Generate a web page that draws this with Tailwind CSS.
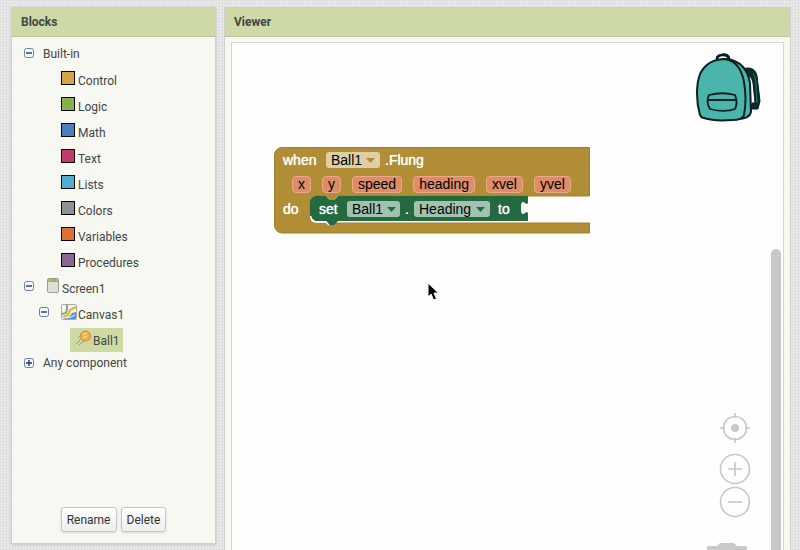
<!DOCTYPE html>
<html lang="en">
<head>
<meta charset="utf-8">
<meta name="viewport" content="width=device-width, initial-scale=1">
<title>Blocks editor</title>
<script src="https://cdn.jsdelivr.net/npm/@tailwindcss/browser@4"></script>
</head>
<body class="h-screen overflow-hidden bg-[#e9e9e9] bg-[repeating-linear-gradient(0deg,#00000008_0_1px,transparent_1px_3px),repeating-linear-gradient(90deg,#00000008_0_1px,transparent_1px_3px)] font-[Roboto,sans-serif] text-[12px] text-[#444]">
<svg class="hidden" aria-hidden="true">
  <symbol id="minus" viewBox="0 0 10 10"><rect x=".5" y=".5" width="9" height="9" rx="2" fill="#f4f6fb" stroke="#6d7db0"/><path d="M2 5h6" stroke="#26357c" stroke-width="1.4"/></symbol>
  <symbol id="plus" viewBox="0 0 10 10"><rect x=".5" y=".5" width="9" height="9" rx="2" fill="#f4f6fb" stroke="#6d7db0"/><path d="M2 5h6M5 2v6" stroke="#26357c" stroke-width="1.4"/></symbol>
</svg>
<div class="flex h-full gap-2 pt-[7px] pr-[9px] pl-[11px]">
  <aside class="mb-[6px] flex w-[205px] shrink-0 flex-col border border-[#cfcfcf] bg-[#f6f8f1] shadow-sm">
    <h2 class="h-[29px] border-b border-[#b9c79b] bg-[#cddaa8] pl-[9px] text-[12px] leading-[28px] font-bold">Blocks</h2>
    <ul class="flex-1 pt-[3px] whitespace-nowrap">
      <li>
        <div class="flex h-[28px] pl-[12px] leading-[28px]"><button class="h-[26px]" aria-label="Collapse Built-in"><svg class="size-[10px]"><use href="#minus"/></svg></button><span class="pl-[9px]">Built-in</span></div>
        <ul class="pl-[49px] leading-[27px]">
          <li class="flex h-[26px] gap-[3px]"><i class="mt-[3px] size-[14px] border border-black bg-[#d3a548]"></i>Control</li>
          <li class="flex h-[26px] gap-[3px]"><i class="mt-[3px] size-[14px] border border-black bg-[#8ab04a]"></i>Logic</li>
          <li class="flex h-[26px] gap-[3px]"><i class="mt-[3px] size-[14px] border border-black bg-[#4a80c0]"></i>Math</li>
          <li class="flex h-[26px] gap-[3px]"><i class="mt-[3px] size-[14px] border border-black bg-[#c33a6c]"></i>Text</li>
          <li class="flex h-[26px] gap-[3px]"><i class="mt-[3px] size-[14px] border border-black bg-[#4eafd0]"></i>Lists</li>
          <li class="flex h-[26px] gap-[3px]"><i class="mt-[3px] size-[14px] border border-black bg-[#8e9094]"></i>Colors</li>
          <li class="flex h-[26px] gap-[3px]"><i class="mt-[3px] size-[14px] border border-black bg-[#dc6f32]"></i>Variables</li>
          <li class="flex h-[26px] gap-[3px]"><i class="mt-[3px] size-[14px] border border-black bg-[#8b6598]"></i>Procedures</li>
        </ul>
      </li>
      <li>
        <div class="flex h-[26px] pl-[12px] leading-[27px]">
          <button class="h-5" aria-label="Collapse Screen1"><svg class="size-[10px]"><use href="#minus"/></svg></button>
          <svg class="mt-[2px] mr-[3px] ml-[13px] h-4 w-3" viewBox="0 0 12 16"><rect x=".5" y=".5" width="11" height="14" rx="1" fill="#dedfdd" stroke="#9b9d98"/><path d="M1 1h10v3H1z" fill="#a4ae55"/><path d="M1 2h2M5 2h1M9 2h2" stroke="#e7d84a"/></svg>Screen1
        </div>
        <ul>
          <li>
            <div class="flex h-[26px] pl-[27px] leading-[27px]">
              <button class="h-5" aria-label="Collapse Canvas1"><svg class="size-[10px]"><use href="#minus"/></svg></button>
              <svg class="mt-[2px] mr-[1px] ml-[12px] size-4" viewBox="0 0 16 16"><rect x=".5" y=".5" width="15" height="15" rx="1" fill="#f3f6f8" stroke="#a5a9ad"/><path d="M1 10l4-1 1-4 0-4" fill="none" stroke="#86ad62" stroke-width="2"/><path d="M2 13l5-2 2-5 6-3" fill="none" stroke="#e7b23e" stroke-width="2.4"/><path d="M2 15l6-2 3-4 4-1v7z" fill="#5d93cb"/><path d="M5 14l5-1 4-2" fill="none" stroke="#eef4fa"/></svg>Canvas1
            </div>
            <ul class="pl-[58px]">
              <li class="flex h-6 w-[53px] bg-[#cddaa3] pl-[5px] leading-[27px]"><svg class="mt-[2px] mr-[1px] h-4 w-[17px]" viewBox="0 0 17 16"><path d="M7 8l-6 6M9 11l-5 4M5 6L3 8" stroke="#8d8d7d" stroke-width=".9"/><circle cx="10.5" cy="6" r="5" fill="#f0b247" stroke="#c58638"/><path d="M8 5c1-2 3-2 4-1M8 8l4-2" fill="none" stroke="#fbdc8e" stroke-width="1.2"/></svg>Ball1</li>
            </ul>
          </li>
        </ul>
      </li>
      <li class="flex h-[22px] pl-[12px] leading-[23px]"><button class="h-[22px]" aria-label="Expand Any component"><svg class="size-[10px]"><use href="#plus"/></svg></button><span class="pl-[9px]">Any component</span></li>
    </ul>
    <div class="flex justify-center gap-1 pb-[11px] text-[#333]">
      <button class="h-[25px] rounded-[3px] border border-[#c6c6c6] bg-linear-to-b from-white to-[#eee] px-[5px] shadow-sm">Rename</button>
      <button class="h-[25px] rounded-[3px] border border-[#c6c6c6] bg-linear-to-b from-white to-[#eee] px-[5px] shadow-sm">Delete</button>
    </div>
  </aside>
  <main class="flex min-w-0 flex-1 flex-col border border-b-0 border-[#cfcfcf] bg-[#f6f8f1]">
    <h2 class="h-[29px] border-b border-[#b9c79b] bg-[#cddaa8] pl-[9px] text-[12px] leading-[28px] font-bold">Viewer</h2>
    <div class="relative mx-[6px] mt-[5px] flex-1 overflow-hidden border border-b-0 border-[#d5d8d2] bg-[#fefefe]">
      <section class="absolute top-[104px] left-[42px] h-[87px] w-[317px] font-['Liberation_Sans',Arial,sans-serif] text-[14px] text-black" aria-label="when Ball1.Flung">
        <svg class="absolute inset-0 h-full w-full" viewBox="0 0 317 87">
          <path d="M8 .5H315.500V49H41a5 5 0 0 0-5 5v17a5 5 0 0 0 5 5H315.500v10H8A7.500 7.500 0 0 1 .5 78.500V8A7.500 7.500 0 0 1 8 .5z" fill="#b18e35" stroke="#a1812f"/>
          <path d="M36 55a6 6 0 0 1 6-6h10l4 4h4l4-4h190v5c0 9-7-7-7 7s7-2 7 7v6H64l-4 4h-4l-4-4H42a6 6 0 0 1-6-6z" fill="#24693f"/>
          <path d="M52 48l4 5h4l4-5z" fill="#b18e35"/>
          <path d="M36.500 69c1 4 3 6 6 6H52l3 3" fill="none" stroke="#fff" stroke-width="1.500"/>
          <path d="M52 73l4 5h4l4-5z" fill="#24693f"/>
        </svg>
        <div class="relative flex h-[26px] items-center pl-[9px] leading-4">
          <span class="w-[43px] text-white [text-shadow:0_0_1px_#fff]">when</span>
          <span class="relative w-[54px]"><select aria-label="Event component" class="block h-4 w-full appearance-none rounded-[3px] bg-[#decfa8] pl-[5px] leading-4"><option>Ball1</option></select><svg class="pointer-events-none absolute top-[6px] right-[5px] h-[5px] w-[9px]" viewBox="0 0 9 5"><path d="M0 0h9L4.500 5z" fill="#b18e35"/></svg></span>
          <span class="pl-[5px] text-white [text-shadow:0_0_1px_#fff]">.Flung</span>
        </div>
        <div class="relative flex h-[23px] items-center gap-[11px] pl-[18px] leading-[15px]">
          <span class="h-[17px] rounded-[4px] border border-[#eba98b] bg-[#df8c69] px-[5px]">x</span>
          <span class="h-[17px] rounded-[4px] border border-[#eba98b] bg-[#df8c69] px-[5px]">y</span>
          <span class="h-[17px] rounded-[4px] border border-[#eba98b] bg-[#df8c69] px-[5px]">speed</span>
          <span class="h-[17px] rounded-[4px] border border-[#eba98b] bg-[#df8c69] px-[5px]">heading</span>
          <span class="h-[17px] rounded-[4px] border border-[#eba98b] bg-[#df8c69] px-[5px]">xvel</span>
          <span class="h-[17px] rounded-[4px] border border-[#eba98b] bg-[#df8c69] px-[5px]">yvel</span>
        </div>
        <div class="relative flex h-[26px] items-center pl-[9px] leading-4">
          <span class="w-[36px] text-white [text-shadow:0_0_1px_#fff]">do</span>
          <span class="w-[28px] text-white [text-shadow:0_0_1px_#fff]">set</span>
          <span class="relative w-[53px]"><select aria-label="Component" class="block h-4 w-full appearance-none rounded-[3px] bg-[#a2c2b0] pl-[5px] leading-4"><option>Ball1</option></select><svg class="pointer-events-none absolute top-[6px] right-[4px] h-[5px] w-[9px]" viewBox="0 0 9 5"><path d="M0 0h9L4.500 5z" fill="#24693f"/></svg></span>
          <span class="w-[14px] text-center text-white [text-shadow:0_0_1px_#fff]">.</span>
          <span class="relative w-[76px]"><select aria-label="Property" class="block h-4 w-full appearance-none rounded-[3px] bg-[#a2c2b0] pl-[5px] leading-4"><option>Heading</option></select><svg class="pointer-events-none absolute top-[6px] right-[5px] h-[5px] w-[9px]" viewBox="0 0 9 5"><path d="M0 0h9L4.500 5z" fill="#24693f"/></svg></span>
          <span class="pl-[8px] text-white [text-shadow:0_0_1px_#fff]">to</span>
        </div>
      </section>
      <svg class="absolute top-[10px] right-[20px] h-[70px] w-[68px]" viewBox="0 0 68 70" fill="#4bb4ab" stroke="#08201e" stroke-width="2" stroke-linejoin="round">
        <path d="M48 16c8-3 13 1 14 7l3 25-2 8h-7l1-6h3l-2-20c-1-6-4-8-8-8" fill="#0b2b29" stroke-width="1"/>
        <path d="M58 20c2 3 3 7 3 12l1 18" fill="none" stroke="#2c7770" stroke-width="1"/>
        <path d="M32 6c14 2 21 12 23 24l1 29c-1 5-5 7-14 7z"/>
        <path d="M5 62C1 48 1 32 5 21 11 9 22 6 30 6c12 2 17 12 19 23 2 12 2 23 0 33-1 4-5 5-12 5-12 1-22 0-28-2-2 0-3-1-4-3z"/>
        <path d="M22 6c0-5 11-6 12 0" fill="none" stroke-width="3"/>
        <path d="M14 42c8-2 19-2 26 0 2 5 2 10 0 14-8 3-17 2-25 0-3-5-3-10-1-14zM12 47h30" stroke-width="1.800"/>
      </svg>
      <svg class="absolute top-[239px] left-[194px] h-[20px] w-[14px]" viewBox="0 0 14 20"><path d="M2 1v14l3-3 2.500 6 3-1.200L8 11h4.500z" fill="#000" stroke="#fff" stroke-width="1"/></svg>
      <div class="absolute top-[368px] right-[32px] flex flex-col items-center">
        <button aria-label="Center workspace"><svg class="size-[32px]" viewBox="0 0 32 32" fill="none" stroke="#c9c9c9" stroke-width="1.700"><circle cx="16" cy="17" r="11.500"/><circle cx="16" cy="17" r="4" fill="#c9c9c9" stroke="none"/><path d="M16 2v5M16 27v5M1 17h5M26 17h5"/></svg></button>
        <button class="mt-[10px]" aria-label="Zoom in"><svg class="size-[32px]" viewBox="0 0 32 32" fill="none" stroke="#c9c9c9" stroke-width="1.700"><circle cx="16" cy="16" r="14.500"/><path d="M9 16h14M16 9v14"/></svg></button>
        <button class="mt-[1px]" aria-label="Zoom out"><svg class="size-[32px]" viewBox="0 0 32 32" fill="none" stroke="#c9c9c9" stroke-width="1.700"><circle cx="16" cy="16" r="14.500"/><path d="M9 16h14"/></svg></button>
      </div>
      <svg class="absolute top-[500px] right-[36px] h-[8px] w-[40px]" viewBox="0 0 40 8"><path d="M0 3h10l3-3h14l3 3h10v5H0z" fill="#c9c9c9"/></svg>
      <div class="absolute top-[206px] right-[2px] bottom-0 w-[10px] rounded-t-full bg-[#c9c7c9]"></div>
    </div>
  </main>
</div>
</body>
</html>
